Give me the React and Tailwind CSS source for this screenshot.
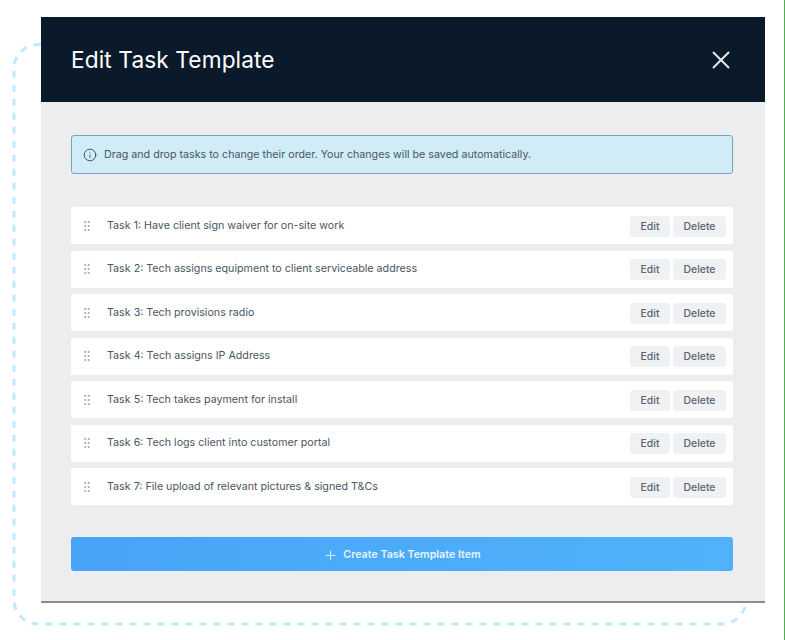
import React from "react";
import { GripVertical, Info, Plus, X } from "lucide-react";

const tasks = [
  "Task 1: Have client sign waiver for on-site work",
  "Task 2: Tech assigns equipment to client serviceable address",
  "Task 3: Tech provisions radio",
  "Task 4: Tech assigns IP Address",
  "Task 5: Tech takes payment for install",
  "Task 6: Tech logs client into customer portal",
  "Task 7: File upload of relevant pictures & signed T&Cs",
];

export default function App() {
  return (
    <div className="relative h-[640px] w-[785px] overflow-hidden border-r border-[#4caf50] bg-white pl-[41px] pt-[17px] font-['Inter',sans-serif]">
      {/* Dashed outline behind the modal */}
      <svg className="absolute left-0 top-0" width="785" height="640" fill="none">
        <rect x="14" y="44.5" width="732" height="579.5" rx="24" stroke="#bfe9fd" strokeWidth="3" strokeDasharray="7 7" />
      </svg>

      <div className="relative flex h-[586px] w-[724px] flex-col border-b-2 border-[#8a8c8e] bg-[#ebedef]">
        <div className="flex h-[85px] items-center justify-between bg-[#0b1a2b] pl-[30px] pr-[29px]">
          <h1 className="pt-[2px] text-[22.7px] leading-none tracking-[0.1px] text-white">Edit Task Template</h1>
          <X size={30} strokeWidth={1.5} className="text-[#e6e8ea]" />
        </div>

        <div className="flex flex-1 flex-col pl-[30px] pr-[32px] pt-[33px]">
          <div className="flex h-[39px] items-center gap-[7px] rounded-[3px] border border-[#7fa3b5] bg-[#d0ecf6] pl-[11px] text-[10.7px] text-[#4b5563]">
            <Info size={14} strokeWidth={1.6} className="text-[#3d4f61]" />
            <span className="pt-[2px]">Drag and drop tasks to change their order. Your changes will be saved automatically.</span>
          </div>

          <div className="mt-[33px] flex flex-col gap-[6.5px]">
            {tasks.map((task) => (
              <div key={task} className="flex h-[37px] items-center rounded-[2px] bg-white pl-[9px] pr-[7px]">
                <GripVertical size={14} strokeWidth={1.75} className="text-[#a8adb3]" />
                <span className="ml-[13px] flex-1 pt-[1px] text-[10.7px] text-[#4b5563]">{task}</span>
                <div className="flex gap-[3px] pt-[1px]">
                  <button className="h-[21px] w-[40px] rounded-[3px] bg-[#eff1f3] pt-[1px] text-[10.4px] font-medium text-[#5b6470]">Edit</button>
                  <button className="h-[21px] w-[53px] rounded-[3px] bg-[#eff1f3] pt-[1px] text-[10.4px] font-medium text-[#5b6470]">Delete</button>
                </div>
              </div>
            ))}
          </div>

          <button className="mt-[32px] flex h-[34px] items-center justify-center gap-[5px] rounded-[3px] bg-gradient-to-r from-[#47a4f7] to-[#50b2fb] pt-[2px] text-[10.7px] font-semibold text-[#e8f4fe]">
            <Plus size={15} strokeWidth={1.5} />
            Create Task Template Item
          </button>
        </div>
      </div>
    </div>
  );
}
